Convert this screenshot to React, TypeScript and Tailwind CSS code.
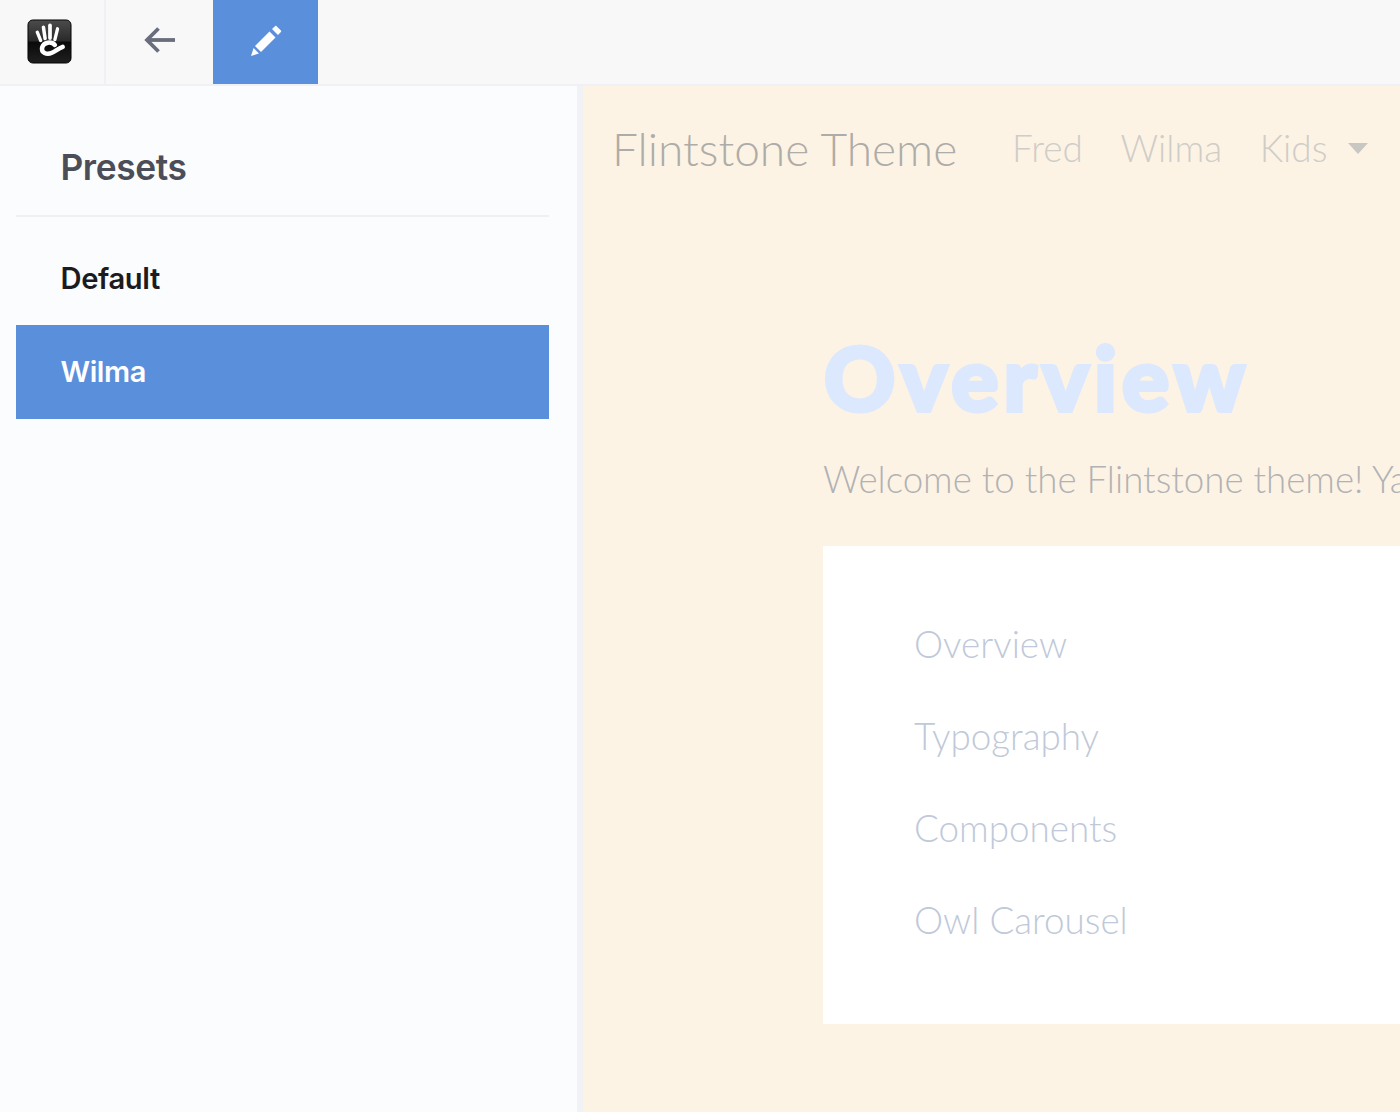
const navLinks = ['Fred', 'Wilma', 'Kids'];
const tocLinks = ['Overview', 'Typography', 'Components', 'Owl Carousel'];

function ConcreteLogo() {
  return (
    <svg width="45" height="45" viewBox="0 0 46 46">
      <defs>
        <linearGradient id="logoShade" x1="0" y1="0" x2="0" y2="1">
          <stop offset="0" stopColor="#4c4c4c" />
          <stop offset="0.48" stopColor="#2a2a2a" />
          <stop offset="0.52" stopColor="#0a0a0a" />
          <stop offset="1" stopColor="#1f1f1f" />
        </linearGradient>
      </defs>
      <rect x="1" y="1" width="44" height="44" rx="5" fill="url(#logoShade)" stroke="#050505" />
      <g fill="none" stroke="#fff" strokeLinecap="round">
        <path d="M10.500 13.500 14 22" strokeWidth="3.400" />
        <path d="M16.800 8.500 18.500 20" strokeWidth="3.600" />
        <path d="M23.500 6.500V19.500" strokeWidth="3.800" />
        <path d="M31.200 10 28.500 21" strokeWidth="3.400" />
        <path d="M28.500 26.500C25 22.500 17 23.500 15.500 29C14.200 34.500 20 37 25.500 34.500C29 33 32 30 36.500 28.500" strokeWidth="4.600" />
      </g>
    </svg>
  );
}

function BackArrow() {
  return (
    <svg width="32" height="28" viewBox="0 0 32 28" fill="none" stroke="#6a6d7c" strokeWidth="3.800">
      <path d="M31 14H3" />
      <path d="M14.500 2.500 3 14l11.500 11.500" />
    </svg>
  );
}

function PencilIcon() {
  return (
    <svg width="32" height="32" viewBox="0 0 32 32" fill="#fff">
      <path d="M22 4 25 1.200c.5-.5 1.100-.5 1.600 0l4.300 4.300c.5.500.5 1.100 0 1.600L28 10z" />
      <path d="M19.500 6.500 25.500 12.500 11 27 5 21z" />
      <path d="M3.600 23 9 28.400 1 31z" />
    </svg>
  );
}

export default function App() {
  return (
    <div className="flex h-screen flex-col overflow-hidden bg-[#fbfcfe] font-['Inter',sans-serif]">
      <header className="flex h-[86px] shrink-0 border-b-2 border-[#f0f1f4] bg-[#f8f8f8]">
        <div className="flex w-[106px] items-center justify-center border-r-2 border-[#f0f1f4] pr-[5px] pb-[2px]">
          <ConcreteLogo />
        </div>
        <div className="flex w-[107px] items-center justify-center pb-[4px]">
          <BackArrow />
        </div>
        <div className="flex w-[105px] items-center justify-center bg-[#5a8fdc] pb-[3px]">
          <PencilIcon />
        </div>
      </header>

      <div className="flex min-h-0 flex-1">
        <aside className="w-[583px] shrink-0 border-r-[6px] border-[#f1f2f5] pl-4 pr-[28px]">
          <h2 className="flex h-[131px] items-center border-b-2 border-[#eff0f3] pl-[44.500px] pt-[35px] text-[35.300px] font-semibold tracking-[-0.4px] text-[#4b4e58]">
            Presets
          </h2>
          <div className="flex h-[108px] items-center pl-[44.500px] pt-[15px] text-[29.200px] font-semibold tracking-[-0.4px] text-[#1c1c20]">
            Default
          </div>
          <div className="flex h-[94px] items-center bg-[#5a8fdc] pl-[44.500px] text-[29px] font-semibold tracking-[-0.4px] text-white">
            Wilma
          </div>
        </aside>

        <main className="min-w-0 flex-1 overflow-hidden whitespace-nowrap bg-[#fdf3e4] font-['Lato',sans-serif] font-light">
          <nav className="flex h-[128px] items-center pl-[29px]">
            <span className="mb-[3px] w-[400px] text-[46.100px] text-[#aeaca8]">Flintstone Theme</span>
            <ul className="mb-[5px] flex text-[37px] text-[#cfcdc8]">
              {navLinks.map((link) => (
                <li key={link} className="mr-[37.500px] last:mr-[21px]">
                  {link}
                </li>
              ))}
            </ul>
            <span className="mb-[4px] border-x-[10px] border-t-[11px] border-x-transparent border-t-[#c9c7c2]" />
          </nav>

          <section className="pl-[240px]">
            <h1 className="mt-[109px] pl-[1px] text-[88px] leading-[108px] font-black tracking-[5.200px] text-[#dce8fd] [-webkit-text-stroke:4px_#dce8fd]">
              Overview
            </h1>
            <p className="mt-[24px] text-[36.700px] leading-[48px] text-[#b0b2b5]">
              Welcome to the Flintstone theme! Yabba dabba doo!
            </p>
            <div className="mt-[43px] flex h-[478px] flex-col gap-[46px] bg-white pt-[75px] pl-[91px]">
              {tocLinks.map((link) => (
                <a key={link} className="text-[36.800px] leading-[46px] text-[#bfc9d9]">
                  {link}
                </a>
              ))}
            </div>
          </section>
        </main>
      </div>
    </div>
  );
}
